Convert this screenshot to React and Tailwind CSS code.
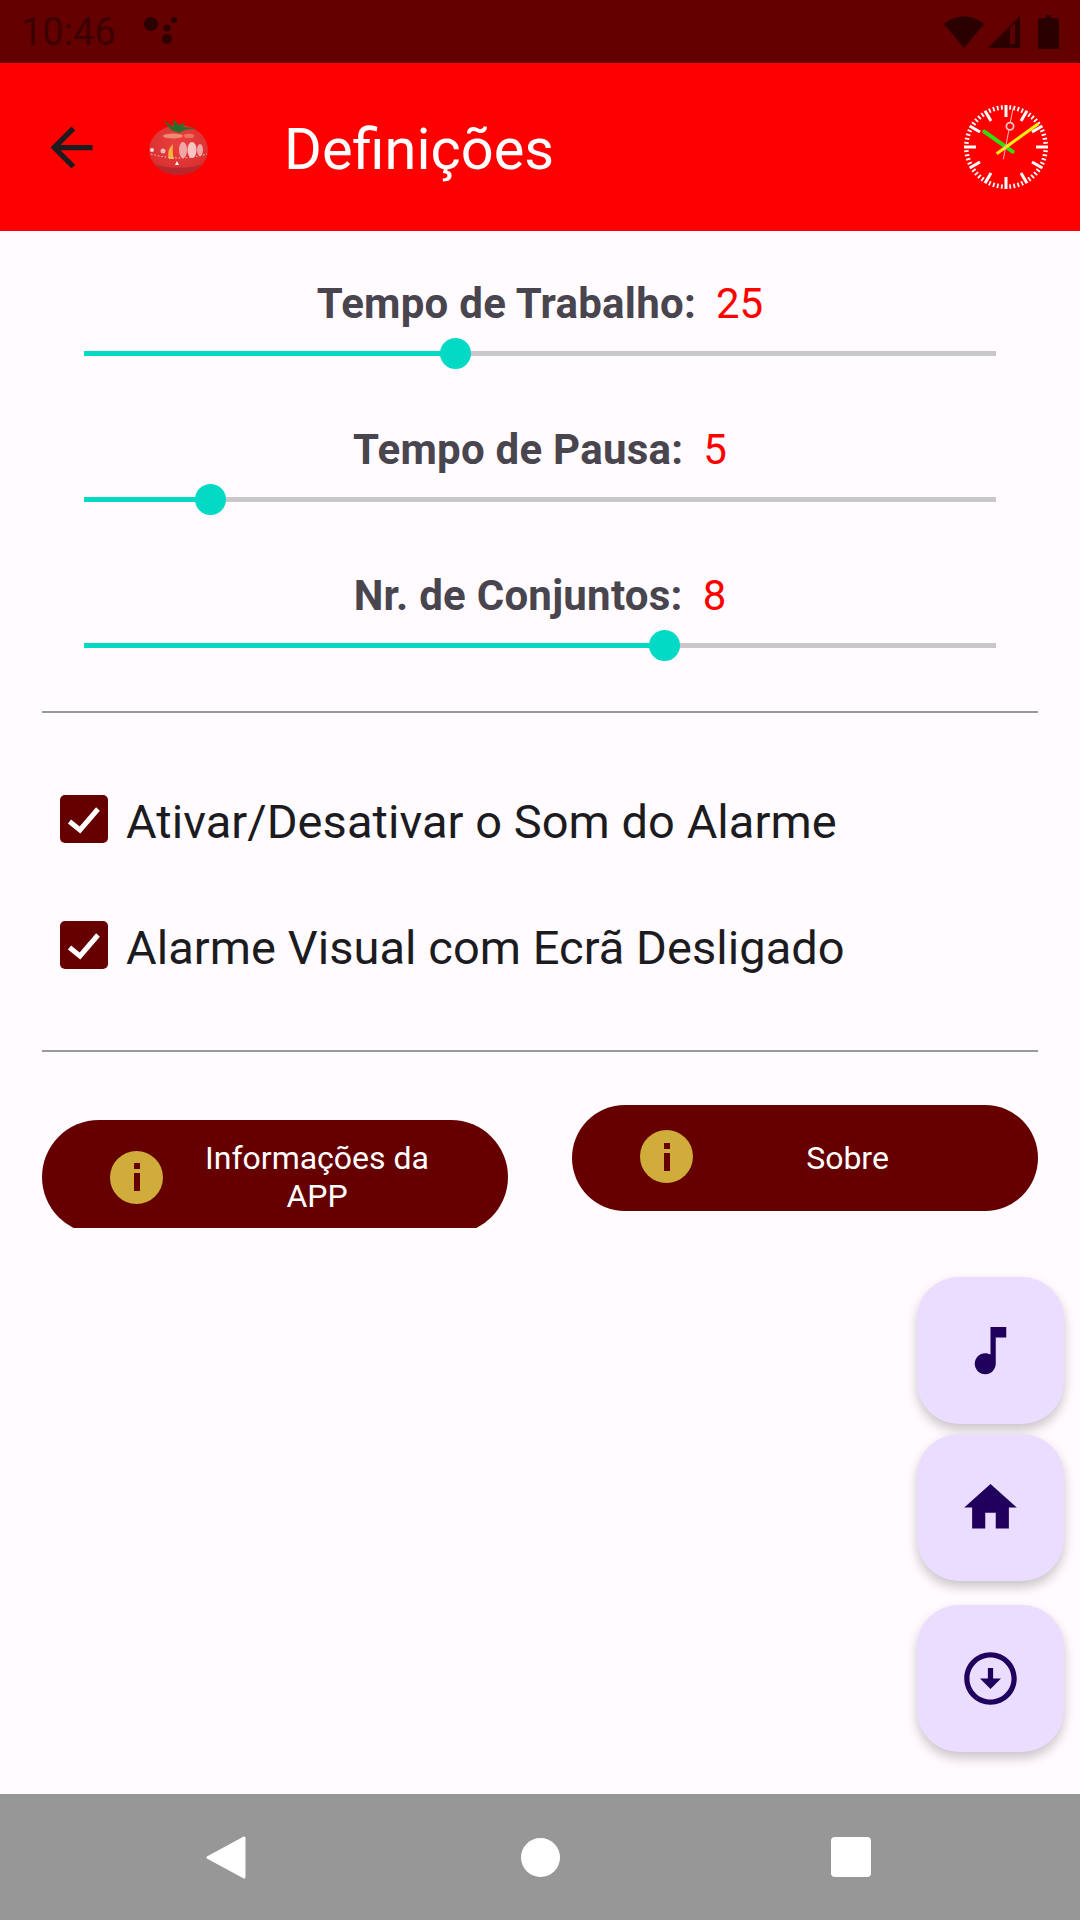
import React from 'react';

const sliders = [
  { label: 'Tempo de Trabalho:', value: 25, fill: 371 },
  { label: 'Tempo de Pausa:', value: 5, fill: 126.5 },
  { label: 'Nr. de Conjuntos:', value: 8, fill: 580 },
];

const checks = ['Ativar/Desativar o Som do Alarme', 'Alarme Visual com Ecrã Desligado'];

const StatusBar = () => (
  <div className="flex h-[63px] items-center bg-[#640000] pl-[21px] pr-[21px]">
    <span className="text-[38px] leading-none text-[#3d0000]">10:46</span>
    <svg width="46" height="36" viewBox="0 0 46 36" className="ml-[23px]" fill="#2b0000">
      <circle cx="12" cy="10" r="7" />
      <circle cx="35" cy="6" r="3" />
      <circle cx="28" cy="14" r="3.5" />
      <circle cx="28" cy="25" r="5" />
    </svg>
    <div className="ml-auto flex items-center">
      <svg width="40" height="33" viewBox="0 0 40 33">
        <path d="M0 9C11-1 29-1 40 9L20 33z" fill="#2b0000" />
      </svg>
      <svg width="32" height="32" viewBox="0 0 32 32" className="ml-[4px]">
        <path d="M32 0V32H0z" fill="#2b0000" />
        <path d="M22 12V28H27V7z" fill="#5c0000" />
      </svg>
      <svg width="21" height="34" viewBox="0 0 21 34" className="ml-[18px]">
        <path d="M6 3H8V0H13V3H15Q21 3 21 5V34H0V5Q0 3 6 3z" fill="#2b0000" />
      </svg>
    </div>
  </div>
);

const Tomato = () => (
  <svg width="60" height="60" viewBox="0 0 60 60" className="ml-[46px]">
    <defs>
      <radialGradient id="tomatoBody" cx="50%" cy="35%" r="70%">
        <stop offset="0%" stopColor="#e8403f" />
        <stop offset="75%" stopColor="#dc3232" />
        <stop offset="100%" stopColor="#c22a30" />
      </radialGradient>
    </defs>
    <ellipse cx="29.5" cy="33" rx="29.5" ry="25" fill="url(#tomatoBody)" />
    <path d="M5 47C16 52 43 52 54 47C48 54 39 58 29.5 58C20 58 11 54 5 47z" fill="#b9272e" />
    <ellipse cx="24" cy="19" rx="10" ry="2.6" fill="#f08a70" />
    <ellipse cx="40" cy="19" rx="5" ry="2.2" fill="#ee7060" />
    <path d="M14 3L25 10L24 2L30 8L36 5L34 10L49 11L36 13L30 16L22 13z" fill="#2f6b2c" />
    <path d="M20 42Q17 34 24 27Q23 36 25 42z" fill="#f5b340" />
    <ellipse cx="34" cy="33" rx="4" ry="8" fill="#f2a5a5" />
    <ellipse cx="43" cy="33" rx="4.5" ry="8" fill="#f8c4c4" />
    <ellipse cx="51" cy="33" rx="3" ry="6" fill="#f2a5a5" />
    <path d="M2 37Q30 45 58 37" stroke="#f6d6d6" strokeWidth="1" strokeDasharray="1.5 2" fill="none" />
    <circle cx="3" cy="33" r="2" fill="#f8dcdc" />
    <circle cx="14" cy="34" r="2.5" fill="#f3b6b6" />
    <path d="M26 48L28 44L30 48z" fill="#ffffff" />
  </svg>
);

const Clock = () => (
  <svg width="84" height="84" viewBox="0 0 84 84" className="ml-auto mr-[32px]">
    {Array.from({ length: 60 }).map((_, i) => {
      const isHour = i % 5 === 0;
      return (
        <line
          key={i}
          x1="42"
          y1="0"
          x2="42"
          y2={isHour ? 12 : 4.5}
          stroke="#ffffff"
          strokeWidth={isHour ? 3 : 1.8}
          transform={`rotate(${i * 6} 42 42)`}
        />
      );
    })}
    <line x1="20.3" y1="26.7" x2="48.7" y2="46.7" stroke="#33dd11" strokeWidth="4" strokeLinecap="round" />
    <line x1="32.7" y1="48.7" x2="74.3" y2="18.7" stroke="#ffee11" strokeWidth="3" />
    <line x1="39.3" y1="54.3" x2="49.3" y2="2" stroke="#f6b9b9" strokeWidth="1" />
    <circle cx="46" cy="21.3" r="3.6" fill="#ff0000" stroke="#f6c4c4" strokeWidth="1.8" />
  </svg>
);

const Toolbar = () => (
  <div className="flex h-[168px] items-center bg-[#ff0000]">
    <svg width="63" height="63" viewBox="0 0 24 24" fill="#1c1b1f" className="ml-[40px]">
      <path d="M20 11H7.83l5.59-5.59L12 4l-8 8 8 8 1.41-1.41L7.83 13H20v-2z" />
    </svg>
    <Tomato />
    <span className="ml-[75px] pt-[6px] text-[57.75px] leading-none text-white">Definições</span>
    <Clock />
  </div>
);

const Slider = ({ label, value, fill }) => (
  <div>
    <div className="flex h-[50px] items-center justify-center gap-[20px] text-[42px] leading-none">
      <span className="font-bold tracking-[0.25px] text-[#49454f]">{label}</span>
      <span className="text-[#ff0000]">{value}</span>
    </div>
    <div className="relative mt-[9px] h-[31px]">
      <div className="absolute left-0 right-0 top-[13px] h-[5px] bg-[#c9c7c9]" />
      <div className="absolute left-0 top-[13px] h-[5px] bg-[#03dac5]" style={{ width: fill }} />
      <div
        className="absolute top-0 h-[31px] w-[31px] rounded-full bg-[#03dac5]"
        style={{ left: fill - 15.5 }}
      />
    </div>
  </div>
);

const CheckRow = ({ text }) => (
  <div className="flex h-[126px] items-center pl-[18px]">
    <div className="flex h-[48px] w-[48px] items-center justify-center rounded-[5px] bg-[#660000]">
      <svg width="48" height="48" viewBox="0 0 48 48" fill="none" stroke="#ffffff" strokeWidth="5">
        <path d="M9.5 26.5L20 35L38 14" />
      </svg>
    </div>
    <span className="ml-[18px] pt-[4px] text-[47px] leading-none tracking-[0.05px] text-[#1c1b1f]">{text}</span>
  </div>
);

const InfoIcon = () => (
  <div className="flex h-[53px] w-[53px] shrink-0 items-center justify-center rounded-full bg-[#d0ac3a]">
    <svg width="8" height="28" viewBox="0 0 8 28" fill="#660000">
      <rect x="1" y="0" width="6" height="6" />
      <rect x="1" y="10" width="6" height="18" />
    </svg>
  </div>
);

const Fab = ({ d, className = '' }) => (
  <div className={`flex h-[147px] w-[147px] items-center justify-center rounded-[42px] bg-[#eaddff] shadow-[0_6px_12px_rgba(0,0,0,0.22)] ${className}`}>
    <svg width="63" height="63" viewBox="0 0 24 24" fill="#21005d">
      <path d={d} />
    </svg>
  </div>
);

const NavBar = () => (
  <div className="mt-auto flex h-[126px] items-center justify-between bg-[#989797] pl-[206px] pr-[209px]">
    <svg width="40" height="43" viewBox="0 0 40 43" fill="#ffffff" stroke="#ffffff" strokeWidth="3" strokeLinejoin="round">
      <path d="M38 2V41L2 21.5z" />
    </svg>
    <div className="ml-[3px] h-[39px] w-[39px] rounded-full bg-white" />
    <div className="h-[40px] w-[40px] rounded-[4px] bg-white" />
  </div>
);

export default function App() {
  return (
    <div className="relative flex h-[1920px] w-[1080px] flex-col overflow-hidden bg-[#fffbfe] font-['Roboto',sans-serif]">
      <StatusBar />
      <Toolbar />

      <div className="mt-[48px] flex flex-col gap-[56px] pl-[84px] pr-[84px]">
        {sliders.map((s) => (
          <Slider key={s.label} {...s} />
        ))}
      </div>

      <div className="mx-[42px] mt-[50px] h-[2px] shrink-0 bg-[#999999]" />

      <div className="mx-[42px] mt-[43px]">
        {checks.map((c) => (
          <CheckRow key={c} text={c} />
        ))}
      </div>

      <div className="mx-[42px] mt-[42px] h-[2px] shrink-0 bg-[#999999]" />

      <div className="mx-[42px] mt-[53px] flex items-start justify-between">
        <div className="mt-[15px] h-[108px] w-[466px] overflow-hidden">
          <div className="flex h-[114px] items-center rounded-[57px] bg-[#660000] pl-[68px] pr-[37px]">
            <InfoIcon />
            <div className="flex-1 text-center">
              <span className="mx-auto block w-[250px] text-[32px] leading-[38px] text-white">Informações da APP</span>
            </div>
          </div>
        </div>
        <div className="flex h-[106px] w-[466px] items-start rounded-[53px] bg-[#660000] pl-[68px] pr-[36px]">
          <div className="mt-[25px]">
            <InfoIcon />
          </div>
          <span className="mt-[35px] flex-1 text-center text-[32px] leading-[37px] text-white">Sobre</span>
        </div>
      </div>

      <div className="absolute right-[16px] top-[1277px] flex flex-col">
        <Fab d="M12 3v10.55c-.59-.34-1.27-.55-2-.55-2.21 0-4 1.79-4 4s1.79 4 4 4 4-1.79 4-4V7h4V3h-6z" />
        <Fab className="mt-[10px]" d="M10 20v-6h4v6h5v-8h3L12 3 2 12h3v8z" />
        <Fab className="mt-[24px]" d="M12 4c4.41 0 8 3.59 8 8s-3.59 8-8 8-8-3.59-8-8 3.59-8 8-8m0-2C6.48 2 2 6.48 2 12s4.48 10 10 10 10-4.48 10-10S17.52 2 12 2zm1 10V8h-2v4H8l4 4 4-4h-3z" />
      </div>

      <NavBar />
    </div>
  );
}
